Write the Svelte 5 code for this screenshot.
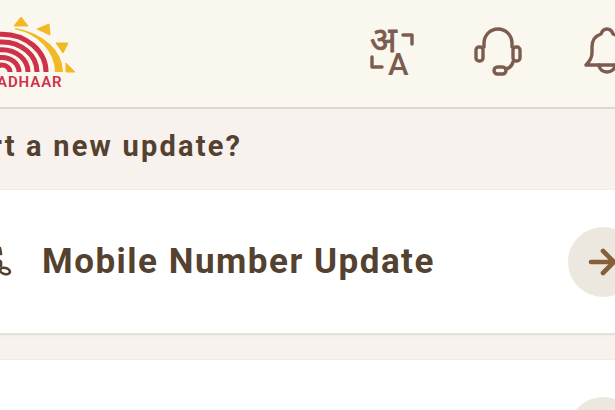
<script lang="ts">
  const rays = [
    "14,26 21,17 28,26",
    "37,29 49,24 50,35",
    "56,43 68,43 63,53",
    "66,63 75,72 66,72",
  ];
  // fingerprint bands, outermost first
  const arcs = [44, 35, 26, 17, 8];
  const cx = 2;
  const cy = 72;
</script>

<div class="screen">
  <header class="topbar">
    <div class="logo">
      <svg width="80" height="92" viewBox="0 0 80 92" aria-label="Aadhaar logo">
        {#each rays as points}
          <polygon {points} fill="#f2b924" stroke="#f2b924" stroke-width="1" stroke-linejoin="round" />
        {/each}
        <path d="M15 28 A 61 45 0 0 1 63 72 L 55 72 A 53 44 0 0 0 15 29.3 Z" fill="#f2b924" />
        {#each arcs as r}
          <path d="M{cx - r} {cy} A {r} {r * 0.86} 0 0 1 {cx + r} {cy}" fill="none" stroke="#cf3148" stroke-width="5" />
        {/each}
        <text x="-3" y="87" class="logo-text">ADHAAR</text>
      </svg>
    </div>
    <div class="actions">
      <svg class="icon" width="50" height="52" viewBox="0 0 50 52" aria-label="Language">
        <text x="4" y="26" class="hindi">अ</text>
        <path d="M37 9h9v9" />
        <path d="M6 31v10h10" />
        <text x="22" y="49" class="latin">A</text>
      </svg>
      <svg class="icon" width="52" height="52" viewBox="0 0 52 52" aria-label="Support">
        <path d="M12 21v-4a14 14 0 0 1 28 0v4" />
        <rect x="4" y="21" width="7" height="14" rx="3" />
        <rect x="41" y="21" width="7" height="14" rx="3" />
        <path d="M41 36c-1 4-3 6-7 7" />
        <rect x="22" y="41" width="12" height="7" rx="3.5" />
      </svg>
      <svg class="icon" width="52" height="52" viewBox="0 0 52 52" aria-label="Notifications">
        <path d="M27 3c-3 0-5 2-6 5-6 2-9 7-9 13v6c0 5-3 9-6 12h42c-3-3-6-7-6-12v-6c0-6-3-11-9-13-1-3-3-5-6-5z" />
        <path d="M19 39a8 7 0 0 0 16 0" />
      </svg>
    </div>
  </header>

  <main class="content">
    <h2 class="title">Want to start a new update?</h2>

    <section class="card">
      <svg class="card-icon" width="44" height="44" viewBox="0 0 44 44" aria-hidden="true">
        <path d="M32 8l1 6M30 19l3 3v4" />
        <ellipse cx="37" cy="31" rx="5" ry="3" transform="rotate(15 37 31)" />
      </svg>
      <span class="card-label">Mobile Number Update</span>
      <span class="go">
        <svg width="30" height="30" viewBox="0 0 30 30" aria-hidden="true">
          <path d="M3 15h24M15 4l11 11-11 11" />
        </svg>
      </span>
    </section>

    <section class="card last">
      <span class="card-label">&nbsp;</span>
      <span class="go"></span>
    </section>
  </main>
</div>

<style>
  :global(body) {
    margin: 0;
    background: #f7f2ee;
  }

  .screen {
    width: 615px;
    height: 410px;
    overflow: hidden;
    font-family: Roboto, "Liberation Sans", sans-serif;
    background: #f7f2ee;
  }

  .topbar {
    height: 109px;
    box-sizing: border-box;
    border-bottom: 2px solid #dcd9d3;
    background: #faf7ef;
    display: flex;
    justify-content: space-between;
    align-items: flex-start;
  }

  .logo {
    height: 92px;
  }

  .logo-text {
    font-family: Roboto, sans-serif;
    font-size: 15px;
    font-weight: 600;
    fill: #cf3148;
    letter-spacing: 0.9px;
  }

  .actions {
    display: flex;
    gap: 56px;
    padding-top: 26px;
    margin-right: -17px;
  }

  .icon {
    fill: none;
    stroke: #7d5c50;
    stroke-width: 3.4;
    stroke-linecap: round;
    stroke-linejoin: round;
    overflow: visible;
  }

  .hindi,
  .latin {
    fill: #7d5c50;
  }

  .hindi {
    font-family: "Noto Sans", "Noto Sans CJK SC", sans-serif;
    font-size: 35px;
    stroke-width: 0.8;
  }

  .latin {
    font-family: Roboto, sans-serif;
    font-size: 31px;
    font-weight: 500;
    stroke: none;
  }

  .content {
    padding-top: 20px;
  }

  .title {
    margin: 0 0 27px -180px;
    font-size: 29px;
    line-height: 34px;
    font-weight: 700;
    letter-spacing: 2.2px;
    color: #54412f;
    white-space: nowrap;
  }

  .card {
    height: 145px;
    box-sizing: border-box;
    margin: 0 -22px 25px -32px;
    display: flex;
    align-items: center;
    background: #fff;
    border-bottom: 2px solid #e4e1da;
    box-shadow: 0 -1px 0 #f0ede8, 0 1px 2px rgba(0, 0, 0, 0.04);
  }

  .card-icon {
    flex: none;
    fill: none;
    stroke: #54412f;
    stroke-width: 2.6;
    stroke-linejoin: round;
    stroke-linecap: round;
  }

  .card-label {
    flex: 1;
    margin-left: 30px;
    font-size: 35px;
    font-weight: 700;
    letter-spacing: 1.5px;
    color: #54412f;
    white-space: nowrap;
  }

  .go {
    flex: none;
    width: 70px;
    height: 70px;
    border-radius: 50%;
    background: #ede8df;
    display: flex;
    align-items: center;
    justify-content: center;
    margin-right: -1px;
  }

  .go svg {
    fill: none;
    stroke: #87603a;
    stroke-width: 4.6;
    stroke-linecap: round;
    stroke-linejoin: round;
  }
</style>
